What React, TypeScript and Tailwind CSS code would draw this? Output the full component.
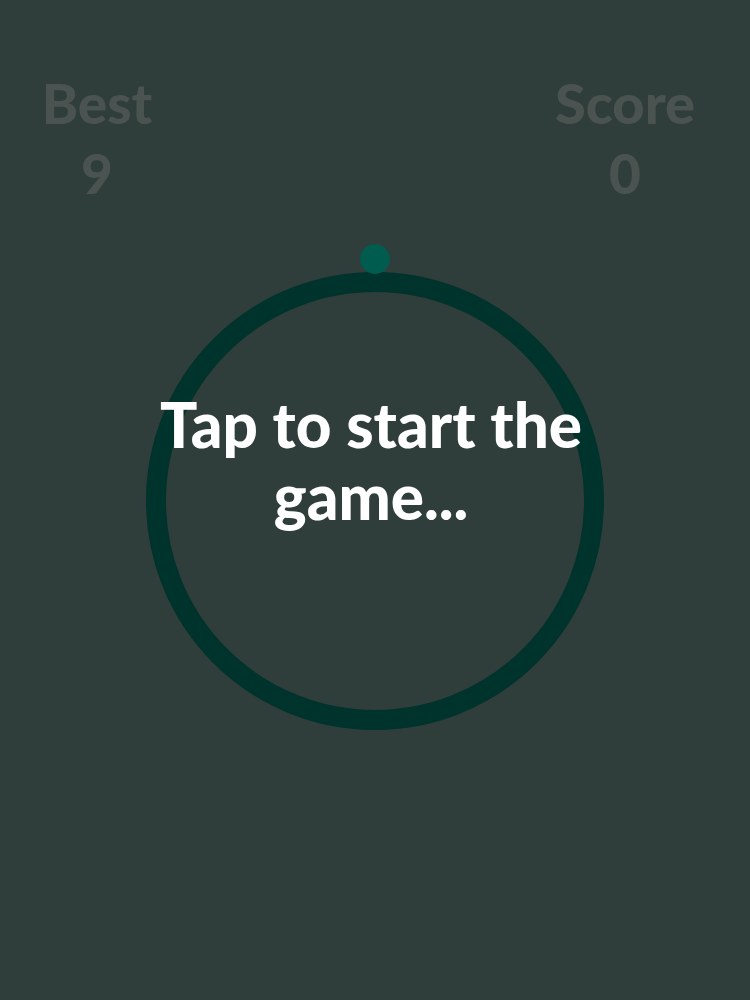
export default function App() {
  return (
    <div
      className="flex h-[1000px] w-[750px] flex-col items-center bg-[#2f3d3b]"
      style={{ fontFamily: "Lato, 'Open Sans', sans-serif" }}
    >
      {/* Scores */}
      <div className="flex w-full justify-between pt-[78px]">
        <div className="ml-[37px] flex w-[120px] flex-col items-center text-[#4b5351]">
          <span className="text-[55px] font-black leading-[50px]">Best</span>
          <span className="mt-[20px] text-[55px] font-black leading-[50px]">9</span>
        </div>
        <div className="mr-[55px] flex w-[140px] flex-col items-center text-[#4b5351]">
          <span className="text-[56px] font-black leading-[50px]">Score</span>
          <span className="mt-[20px] text-[55px] font-black leading-[50px]">0</span>
        </div>
      </div>

      {/* Ring */}
      <div className="relative mt-[74px] h-[458px] w-[458px] rounded-full border-[20px] border-[#00332c]">
        <div className="absolute left-1/2 top-[-48px] h-[30px] w-[30px] -translate-x-1/2 rounded-full bg-[#005c4f]" />
        <div className="flex flex-col items-center pr-[8px] pt-[96px] text-[62px] font-black leading-[72px] text-white">
          <span className="whitespace-nowrap">Tap to start the</span>
          <span>game...</span>
        </div>
      </div>
    </div>
  );
}
